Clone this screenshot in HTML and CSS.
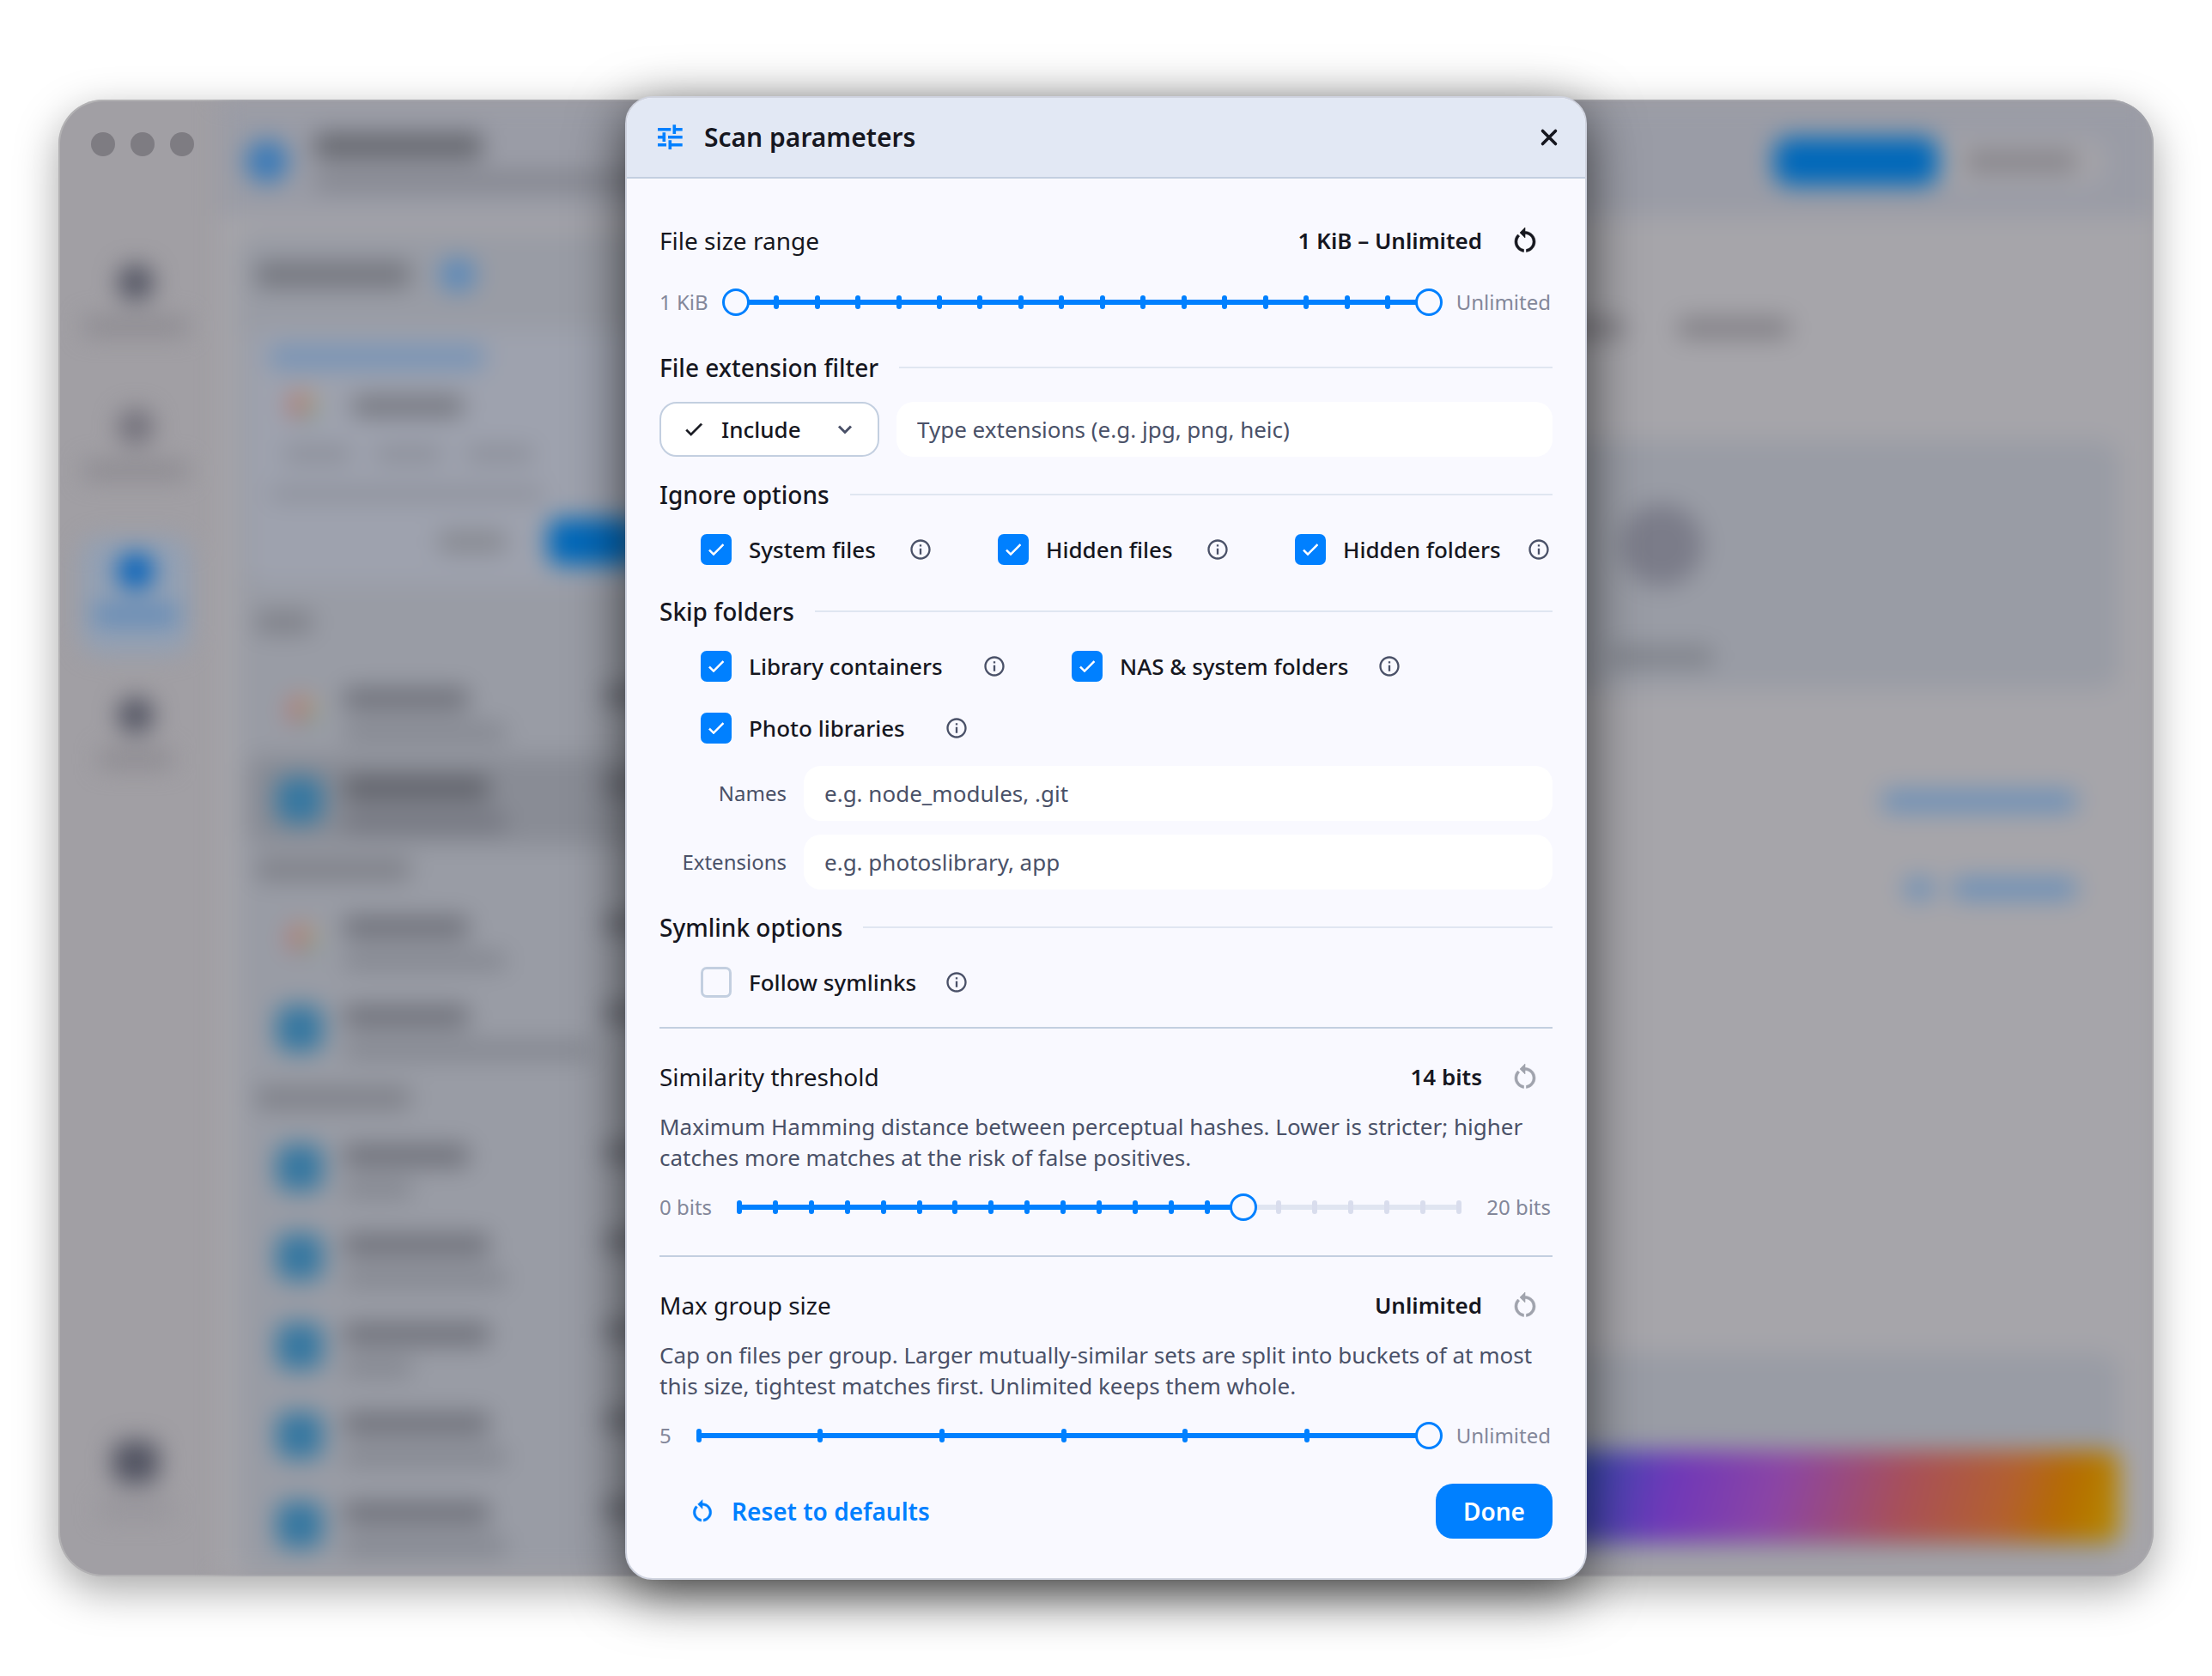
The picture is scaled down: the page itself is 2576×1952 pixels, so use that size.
FILE: index.html
```html
<!DOCTYPE html>
<html lang="en">
<head>
    <meta charset="UTF-8">
    <meta name="viewport" content="width=device-width, initial-scale=1.0">
    <title>Scan parameters</title>
    <link rel="stylesheet" href="styles.css">
</head>
<body>
    <!-- shared icons -->
    <svg class="sprite" aria-hidden="true">
        <symbol id="icon-reset" viewBox="0 0 24 24">
            <path d="M12 5V2L8 6l4 4V7c3.31 0 6 2.69 6 6 0 2.97-2.17 5.43-5 5.91v2.02c3.95-.49 7-3.85 7-7.93 0-4.42-3.58-8-8-8zm-6 8c0-1.65.67-3.15 1.76-4.24L6.34 7.34C4.9 8.79 4 10.79 4 13c0 4.08 3.05 7.44 7 7.93v-2.02c-2.83-.48-5-2.94-5-5.91z" fill="currentColor"/>
        </symbol>
        <symbol id="icon-info" viewBox="0 0 24 24">
            <path d="M11 7h2v2h-2zm0 4h2v6h-2zm1-9C6.48 2 2 6.48 2 12s4.48 10 10 10 10-4.48 10-10S17.52 2 12 2zm0 18c-4.41 0-8-3.59-8-8s3.59-8 8-8 8 3.59 8 8-3.59 8-8 8z" fill="currentColor"/>
        </symbol>
        <symbol id="icon-check" viewBox="0 0 24 24">
            <path d="M9 16.17L4.83 12l-1.42 1.41L9 19 21 7l-1.41-1.41z" fill="currentColor"/>
        </symbol>
    </svg>

    <div class="stage">
        <!-- app window, blurred while the dialog is open -->
        <div class="window" aria-hidden="true">
            <div class="lights"><i></i><i></i><i></i></div>
            <div class="app">
                <div class="rail">
                    <div class="rail-item"><i class="dot"></i><i class="cap"></i></div>
                    <div class="rail-item"><i class="dot faint"></i><i class="cap"></i></div>
                    <div class="rail-item active"><i class="dot"></i><i class="cap"></i></div>
                    <div class="rail-item"><i class="dot"></i><i class="cap short"></i></div>
                    <div class="rail-item last"><i class="dot big"></i><i class="cap short faint"></i></div>
                </div>
                <div class="content">
                    <div class="topbar">
                        <i class="logo"></i>
                        <div class="topbar-text"><i class="bar title"></i><i class="bar subtitle"></i></div>
                        <div class="segmented"><i class="segment on"></i><div class="segment"><i class="bar"></i></div></div>
                    </div>
                    <div class="columns">
                        <div class="list">
                            <div class="list-head"><i class="bar"></i><i class="count"></i></div>
                            <div class="card">
                                <i class="bar link"></i>
                                <div class="card-row"><i class="google"></i><i class="bar name"></i></div>
                                <div class="card-meta"><i class="bar"></i><i class="bar"></i><i class="bar"></i></div>
                                <i class="bar note"></i>
                                <div class="card-actions"><i class="bar"></i><i class="card-button"></i></div>
                            </div>
                            <i class="bar group short"></i>
                            <div class="row"><i class="google"></i><div><i class="bar name"></i><i class="bar meta"></i></div><i class="mark"></i></div>
                            <div class="row selected"><i class="folder"></i><div><i class="bar name wide"></i><i class="bar meta"></i></div><i class="mark"></i></div>
                            <i class="bar group"></i>
                            <div class="row"><i class="google"></i><div><i class="bar name"></i><i class="bar meta"></i></div><i class="mark"></i></div>
                            <div class="row"><i class="folder"></i><div><i class="bar name"></i><i class="bar meta long"></i></div><i class="mark"></i></div>
                            <i class="bar group"></i>
                            <div class="row"><i class="folder"></i><div><i class="bar name"></i><i class="bar meta brief"></i></div><i class="mark"></i></div>
                            <div class="row"><i class="folder"></i><div><i class="bar name wide"></i><i class="bar meta"></i></div><i class="mark"></i></div>
                            <div class="row"><i class="folder"></i><div><i class="bar name wide"></i><i class="bar meta brief"></i></div><i class="mark"></i></div>
                            <div class="row"><i class="folder"></i><div><i class="bar name wide"></i><i class="bar meta"></i></div><i class="mark"></i></div>
                            <div class="row"><i class="folder"></i><div><i class="bar name wide"></i><i class="bar meta"></i></div><i class="mark"></i></div>
                        </div>
                        <div class="main">
                            <div class="tabs"><i class="bar"></i><i class="bar"></i></div>
                            <div class="drop"><i class="drop-icon"></i><i class="bar"></i></div>
                            <div class="links"><i class="bar link"></i><div><i class="bar link"></i><i class="bar link"></i></div></div>
                            <div class="footer"><i class="rainbow"></i></div>
                        </div>
                    </div>
                </div>
            </div>
        </div>

        <form class="dialog" role="dialog" aria-labelledby="dialogTitle">
            <header class="dialog-head">
                <svg class="tune" viewBox="0 0 40 40" aria-hidden="true">
                    <path d="M4 10.7h15.3M23.3 5.3V16M23.3 10.7h9.4M4 19.7h7.3M11.3 14.3V25M16 19.7h16.7M4 28.7h10M18.3 23.3V34M18.3 28.7h14.4" fill="none" stroke="currentColor" stroke-width="3.6"/>
                </svg>
                <h1 id="dialogTitle">Scan parameters</h1>
                <button type="button" class="close" aria-label="Close">
                    <svg viewBox="0 0 32 32"><path d="M8.5 8.5l15 15M23.5 8.5l-15 15" fill="none" stroke="currentColor" stroke-width="3.6" stroke-linecap="round"/></svg>
                </button>
            </header>

            <div class="dialog-body">
                <section class="param">
                    <div class="param-head">
                        <h2>File size range</h2>
                        <output>1 KiB – Unlimited</output>
                        <button type="button" class="icon-button" aria-label="Reset file size range"><svg><use href="#icon-reset"/></svg></button>
                    </div>
                    <div class="range-row">
                        <span>1 KiB</span>
                        <div class="slider dual" data-steps="17">
                            <input type="range" min="0" max="17" value="0" aria-label="Minimum file size">
                            <input type="range" min="0" max="17" value="17" aria-label="Maximum file size">
                        </div>
                        <span>Unlimited</span>
                    </div>
                </section>

                <section class="group">
                    <h2>File extension filter</h2>
                    <div class="filter">
                        <div class="select">
                            <svg class="select-check" aria-hidden="true"><use href="#icon-check"/></svg>
                            <select aria-label="Filter mode">
                                <option>Include</option>
                                <option>Exclude</option>
                            </select>
                            <svg class="select-arrow" viewBox="0 0 20 20" aria-hidden="true"><path d="M3 6.500l7 7 7-7" fill="none" stroke="currentColor" stroke-width="3"/></svg>
                        </div>
                        <input type="text" class="field" placeholder="Type extensions (e.g. jpg, png, heic)" aria-label="Extensions to filter">
                    </div>
                </section>

                <section class="group">
                    <h2>Ignore options</h2>
                    <div class="checks three">
                        <div class="check">
                            <label><input type="checkbox" checked><svg><use href="#icon-check"/></svg>System files</label>
                            <button type="button" class="info" aria-label="About system files"><svg><use href="#icon-info"/></svg></button>
                        </div>
                        <div class="check">
                            <label><input type="checkbox" checked><svg><use href="#icon-check"/></svg>Hidden files</label>
                            <button type="button" class="info" aria-label="About hidden files"><svg><use href="#icon-info"/></svg></button>
                        </div>
                        <div class="check">
                            <label><input type="checkbox" checked><svg><use href="#icon-check"/></svg>Hidden folders</label>
                            <button type="button" class="info" aria-label="About hidden folders"><svg><use href="#icon-info"/></svg></button>
                        </div>
                    </div>
                </section>

                <section class="group">
                    <h2>Skip folders</h2>
                    <div class="checks two">
                        <div class="check">
                            <label><input type="checkbox" checked><svg><use href="#icon-check"/></svg>Library containers</label>
                            <button type="button" class="info" aria-label="About library containers"><svg><use href="#icon-info"/></svg></button>
                        </div>
                        <div class="check">
                            <label><input type="checkbox" checked><svg><use href="#icon-check"/></svg>NAS &amp; system folders</label>
                            <button type="button" class="info" aria-label="About NAS and system folders"><svg><use href="#icon-info"/></svg></button>
                        </div>
                        <div class="check narrow">
                            <label><input type="checkbox" checked><svg><use href="#icon-check"/></svg>Photo libraries</label>
                            <button type="button" class="info" aria-label="About photo libraries"><svg><use href="#icon-info"/></svg></button>
                        </div>
                    </div>
                    <div class="fields">
                        <label for="skipNames">Names</label>
                        <input type="text" class="field" id="skipNames" placeholder="e.g. node_modules, .git">
                        <label for="skipExtensions">Extensions</label>
                        <input type="text" class="field" id="skipExtensions" placeholder="e.g. photoslibrary, app">
                    </div>
                </section>

                <section class="group">
                    <h2>Symlink options</h2>
                    <div class="checks two">
                        <div class="check narrow">
                            <label><input type="checkbox"><svg><use href="#icon-check"/></svg>Follow symlinks</label>
                            <button type="button" class="info" aria-label="About symlinks"><svg><use href="#icon-info"/></svg></button>
                        </div>
                    </div>
                </section>

                <section class="param divided first">
                    <div class="param-head">
                        <h2>Similarity threshold</h2>
                        <output>14 bits</output>
                        <button type="button" class="icon-button" aria-label="Reset similarity threshold" disabled><svg><use href="#icon-reset"/></svg></button>
                    </div>
                    <p>Maximum Hamming distance between perceptual hashes. Lower is stricter; higher catches more matches at the risk of false positives.</p>
                    <div class="range-row">
                        <span>0 bits</span>
                        <div class="slider" data-steps="20">
                            <input type="range" min="0" max="20" value="14" aria-label="Similarity threshold">
                        </div>
                        <span>20 bits</span>
                    </div>
                </section>

                <section class="param divided">
                    <div class="param-head">
                        <h2>Max group size</h2>
                        <output>Unlimited</output>
                        <button type="button" class="icon-button" aria-label="Reset max group size" disabled><svg><use href="#icon-reset"/></svg></button>
                    </div>
                    <p>Cap on files per group. Larger mutually-similar sets are split into buckets of at most this size, tightest matches first. Unlimited keeps them whole.</p>
                    <div class="range-row">
                        <span>5</span>
                        <div class="slider" data-steps="6">
                            <input type="range" min="0" max="6" value="6" aria-label="Max group size">
                        </div>
                        <span>Unlimited</span>
                    </div>
                </section>

                <footer class="actions">
                    <button type="reset" class="reset"><svg><use href="#icon-reset"/></svg>Reset to defaults</button>
                    <button type="submit" class="done">Done</button>
                </footer>
            </div>
        </form>
    </div>

    <script src="script.js"></script>
</body>
</html>
```

FILE: styles.css
```css
* {
    box-sizing: border-box;
}
body {
    margin: 0;
    background: #fff;
    color: #16171f;
    font-family: 'Noto Sans', sans-serif;
    font-size: 26px;
    line-height: 36px;
}
button, input, select {
    font: inherit;
    color: inherit;
    margin: 0;
}
button {
    padding: 0;
    border: none;
    background: none;
    cursor: pointer;
}
h1, h2, p {
    margin: 0;
}
svg {
    display: block;
    flex: none;
}
i {
    display: block;
    flex: none;
}
.sprite {
    display: none;
}

/* window and dialog share one grid cell */
.stage {
    display: grid;
    min-height: 100vh;
    padding: 112px 68px;
}
.window, .dialog {
    grid-area: 1 / 1;
}

/* app window */
.window {
    position: relative;
    display: flex;
    margin: 4px 0;
    border-radius: 52px;
    background: #a19fa4;
    box-shadow: inset 0 0 0 2px rgba(190, 190, 190, 0.6), 0 16px 50px rgba(0, 0, 0, 0.35);
    overflow: hidden;
}
.lights {
    position: absolute;
    z-index: 1;
    top: 38px;
    left: 38px;
    display: flex;
    gap: 18px;
}
.lights i {
    width: 28px;
    height: 28px;
    border-radius: 50%;
    background: #7e7c82;
}
.app {
    display: flex;
    flex: 1;
    filter: blur(14px);
}
.bar {
    width: 130px;
    height: 24px;
    border-radius: 8px;
    background: #75777f;
}
.bar.link {
    background: #6a8fb8;
}

.rail {
    display: flex;
    flex-direction: column;
    align-items: center;
    gap: 32px;
    width: 188px;
    padding: 174px 8px 40px 0;
}
.rail-item {
    display: flex;
    flex-direction: column;
    align-items: center;
    gap: 20px;
    width: 128px;
    height: 136px;
    padding-top: 18px;
    border-radius: 24px;
}
.rail-item.active {
    background: #92a0b4;
}
.rail-item.last {
    margin-top: auto;
}
.dot {
    width: 42px;
    height: 42px;
    border-radius: 50%;
    background: #525462;
}
.dot.faint {
    background: #72707a;
}
.dot.big {
    width: 54px;
    height: 50px;
    border-radius: 16px;
}
.cap {
    width: 120px;
    height: 20px;
    background: #8b898f;
}
.cap.short {
    width: 84px;
}
.cap.faint {
    background: #96949a;
}
.active .dot {
    background: #0060bb;
}
.active .cap {
    width: 96px;
    background: #5c88b8;
}

.content {
    display: flex;
    flex-direction: column;
    flex: 1;
    background: #a6a5aa;
}
.topbar {
    display: flex;
    align-items: center;
    gap: 30px;
    height: 136px;
    padding: 8px 58px 0 30px;
    background: #9a9ca6;
}
.logo {
    width: 50px;
    height: 50px;
    border-radius: 50%;
    background: #3a7ab8;
}
.topbar-text {
    flex: 1;
}
.title {
    width: 196px;
    height: 30px;
    margin-bottom: 16px;
    background: #66686f;
}
.subtitle {
    width: 440px;
    height: 20px;
    background: #82848d;
}
.segmented {
    display: flex;
    border-radius: 20px;
    background: #a5a4a9;
}
.segment {
    display: flex;
    align-items: center;
    justify-content: center;
    width: 192px;
    height: 56px;
    border-radius: 18px;
}
.segment.on {
    background: #0068ba;
}
.segment .bar {
    background: #86848a;
}
.columns {
    display: flex;
    flex: 1;
    gap: 24px;
    padding: 18px 40px 4px 20px;
}

.list {
    display: flex;
    flex-direction: column;
    width: 480px;
    padding: 32px 12px 0;
    background: #999ca5;
    border-radius: 24px;
}
.list-head {
    display: flex;
    align-items: center;
    gap: 34px;
    height: 36px;
    padding-left: 10px;
}
.list-head .bar {
    width: 180px;
    height: 30px;
}
.count {
    width: 42px;
    height: 38px;
    border-radius: 18px;
    background: #5a89ba;
}
.card {
    display: flex;
    flex-direction: column;
    height: 296px;
    margin: 46px 0 32px;
    padding: 18px 0 0 26px;
    border-radius: 20px;
    background: #9ea2ae;
}
.card .link {
    width: 250px;
    height: 28px;
    background: #7894b6;
}
.card-row {
    display: flex;
    align-items: center;
    gap: 40px;
    margin-top: 26px;
    padding-left: 22px;
}
.google {
    width: 34px;
    height: 34px;
    border-radius: 50%;
    background: conic-gradient(#b5a080 0 25%, #7f9f86 0 50%, #8c7da5 0 60%, #bb7268 0);
}
.card-meta {
    display: flex;
    gap: 26px;
    margin: 30px 0;
    padding-left: 16px;
}
.card-meta .bar, .note {
    width: 80px;
    height: 18px;
    background: #8a8d97;
}
.card .note {
    width: 320px;
    height: 14px;
}
.card-actions {
    display: flex;
    align-items: center;
    justify-content: flex-end;
    gap: 48px;
    margin-top: 22px;
}
.card-actions .bar {
    width: 80px;
    background: #86888f;
}
.card-button {
    width: 106px;
    height: 54px;
    border-radius: 14px;
    background: #0068ba;
}
.group.bar {
    width: 180px;
    height: 26px;
    margin: 16px 10px;
    background: #7f8189;
}
.group.bar.short {
    width: 66px;
    margin: 0 10px 38px;
}
.row {
    display: flex;
    align-items: center;
    gap: 24px;
    height: 104px;
    padding-left: 34px;
    border-radius: 16px;
}
.row.selected {
    background: #898c95;
}
.row .google {
    margin: 0 6px 0 14px;
}
.row .name {
    width: 146px;
    height: 26px;
    margin: 8px 0 16px;
    background: #70727b;
}
.row .name.wide {
    width: 170px;
}
.row .meta {
    width: 190px;
    height: 20px;
    background: #82858e;
}
.row .meta.brief {
    width: 80px;
}
.row .meta.long {
    width: 290px;
}
.row.selected .name {
    background: #5f6169;
}
.row.selected .meta {
    background: #72747e;
}
.folder {
    width: 54px;
    height: 54px;
    border-radius: 14px;
    background: #3577a1;
}
.mark {
    width: 40px;
    height: 22px;
    margin: 0 0 36px auto;
    background: #6c6e77;
}
/* long meta lines run under the dialog */
.row > div {
    width: 210px;
}

.main {
    display: flex;
    flex-direction: column;
    flex: 0 1 1066px;
    margin-left: auto;
}
.tabs {
    display: flex;
    justify-content: flex-end;
    gap: 62px;
    margin: 100px 384px 119px 0;
}
.tabs .bar {
    background: #828086;
}
.drop {
    display: flex;
    flex-direction: column;
    align-items: center;
    gap: 70px;
    height: 290px;
    padding-top: 74px;
    border-radius: 24px;
    background: #999ca5;
}
.drop-icon {
    width: 96px;
    height: 96px;
    border-radius: 50%;
    background: #7b7c89;
}
.drop .bar {
    width: 120px;
    background: #80838b;
}
.links {
    display: flex;
    flex-direction: column;
    align-items: flex-end;
    gap: 78px;
    padding: 118px 50px;
}
.links .bar {
    width: 226px;
}
.links div {
    display: flex;
    gap: 22px;
}
.links div .bar:first-child {
    width: 34px;
}
.links div .bar:last-child {
    width: 144px;
}
.footer {
    display: flex;
    align-items: flex-end;
    height: 240px;
    margin: auto 0 16px;
    padding-bottom: 20px;
    border-radius: 24px;
    background: #999ca5;
}
.rainbow {
    flex: 1;
    height: 106px;
    border-radius: 16px;
    background: linear-gradient(105deg, #006ad0 0%, #2c4fb0 38%, #7038b8 51%, #8b45a5 62%, #a85058 76%, #b3602f 87%, #b56c00 93%, #b58700 99%);
}

/* dialog */
.dialog {
    position: relative;
    place-self: center;
    width: 100%;
    max-width: 1120px;
    border: 2px solid #cfd3df;
    border-radius: 32px;
    background: #f9f9ff;
    box-shadow: 0 16px 64px rgba(0, 0, 0, 0.65);
    overflow: hidden;
}
.dialog-head {
    display: flex;
    align-items: center;
    gap: 18px;
    height: 94px;
    padding: 0 26px 0 32px;
    border-bottom: 2px solid #c3cfe0;
    background: #e2e8f4;
}
.tune {
    width: 40px;
    height: 40px;
    color: #0080ff;
}
.dialog-head h1 {
    flex: 1;
    font-size: 30px;
    font-weight: 600;
}
.close svg {
    width: 32px;
    height: 32px;
}
.dialog-body {
    padding: 40px 38px 46px;
}
.dialog h2 {
    font-size: 28px;
    line-height: 40px;
    font-weight: 500;
}

/* parameter blocks with a slider */
.param-head {
    display: flex;
    align-items: center;
    height: 64px;
}
.dialog .param-head h2 {
    flex: 1;
    font-weight: 400;
}
.param-head output {
    margin-right: 18px;
    font-weight: 600;
}
.icon-button {
    display: flex;
    align-items: center;
    justify-content: center;
    width: 64px;
    height: 64px;
}
.icon-button svg {
    width: 36px;
    height: 36px;
    stroke: currentColor;
    stroke-width: 0.4;
}
.icon-button:disabled {
    color: #a0a3ad;
    cursor: default;
}
.param p {
    margin-top: 8px;
    color: #4a5168;
}
.divided {
    margin-top: 40px;
    padding-top: 24px;
    border-top: 2px solid #c3cfe0;
}
.divided.first {
    margin-top: 24px;
}
.range-row {
    display: flex;
    align-items: center;
    gap: 16px;
    margin-top: 24px;
    height: 32px;
    padding-right: 2px;
    font-size: 24px;
    color: #83879a;
}
.slider {
    position: relative;
    flex: 1;
    height: 32px;
}
.track, .fill {
    position: absolute;
    top: 13px;
    left: 16px;
    right: 16px;
    height: 6px;
    border-radius: 3px;
    background: #e0e5f1;
}
.fill {
    right: auto;
    background: #0080ff;
}
.ticks {
    position: absolute;
    top: 8px;
    left: 13px;
    right: 13px;
    display: flex;
    justify-content: space-between;
}
.ticks i {
    width: 6px;
    height: 16px;
    border-radius: 3px;
    background: #d9dded;
}
.ticks i.on {
    background: #0080ff;
}
.slider input {
    -webkit-appearance: none;
    appearance: none;
    position: absolute;
    top: 0;
    left: 0;
    width: 100%;
    height: 32px;
    background: none;
    outline: none;
}
.slider input::-webkit-slider-thumb {
    -webkit-appearance: none;
    width: 32px;
    height: 32px;
    border: 3px solid #0080ff;
    border-radius: 50%;
    background: #f9f9ff;
    pointer-events: auto;
}
.slider.dual input {
    pointer-events: none;
}

/* titled groups */
.group:not(.bar) {
    margin-top: 24px;
}
.param + .group:not(.bar) {
    margin-top: 40px;
}
.group h2 {
    display: flex;
    align-items: center;
    gap: 24px;
}
.group h2::after {
    content: '';
    flex: 1;
    height: 2px;
    background: #e0e6f1;
}
.filter {
    display: flex;
    gap: 20px;
    margin-top: 20px;
}
.select {
    position: relative;
    width: 256px;
}
.select select {
    -webkit-appearance: none;
    appearance: none;
    width: 100%;
    height: 64px;
    padding: 0 64px 0 70px;
    border: 2px solid #c3cfe0;
    border-radius: 20px;
    background: #fff;
    font-weight: 500;
}
.select svg {
    position: absolute;
    pointer-events: none;
}
.select-check {
    top: 19px;
    left: 27px;
    width: 26px;
    height: 26px;
    stroke: currentColor;
    stroke-width: 0.6;
}
.select-arrow {
    top: 22px;
    right: 30px;
    width: 20px;
    height: 20px;
    color: #4a5168;
}
.field {
    flex: 1;
    min-width: 0;
    height: 64px;
    padding: 0 24px;
    border: none;
    border-radius: 20px;
    background: #fff;
}
.field::placeholder {
    color: #4a5168;
    opacity: 1;
}
.checks {
    display: grid;
    gap: 16px 74px;
    margin-top: 16px;
    padding-left: 48px;
}
.checks.three {
    grid-template-columns: 272px 272px 300px;
}
.checks.two {
    grid-template-columns: 358px 386px;
}
.check {
    display: flex;
    align-items: center;
    justify-content: space-between;
    height: 56px;
}
.check.narrow {
    width: 314px;
}
.check label {
    position: relative;
    display: flex;
    align-items: center;
    gap: 20px;
    font-weight: 500;
    white-space: nowrap;
}
.check input {
    -webkit-appearance: none;
    appearance: none;
    width: 36px;
    height: 36px;
    border: 3px solid #c3cfe0;
    border-radius: 7px;
}
.check input:checked {
    border-color: #0080ff;
    background: #0080ff;
}
.check label svg {
    position: absolute;
    top: 6px;
    left: 6px;
    width: 24px;
    height: 24px;
    color: #fff;
    stroke: currentColor;
    stroke-width: 0.6;
    visibility: hidden;
}
.check input:checked + svg {
    visibility: visible;
}
.info {
    display: flex;
    align-items: center;
    justify-content: center;
    width: 32px;
    height: 32px;
    color: #4a5168;
}
.info svg {
    width: 28px;
    height: 28px;
}
.fields {
    display: grid;
    grid-template-columns: 148px 1fr;
    gap: 16px 20px;
    align-items: center;
    margin-top: 16px;
}
.fields label {
    font-size: 24px;
    text-align: right;
    color: #4a5168;
}

.actions {
    display: flex;
    align-items: center;
    justify-content: space-between;
    margin-top: 40px;
    font-size: 28px;
    font-weight: 600;
}
.reset {
    display: flex;
    align-items: center;
    gap: 18px;
    height: 64px;
    padding: 0 34px;
    color: #0080ff;
}
.reset svg {
    width: 32px;
    height: 32px;
    stroke: currentColor;
    stroke-width: 0.4;
}
.done {
    height: 64px;
    padding: 0 32px;
    border-radius: 20px;
    background: #0080ff;
    color: #fff;
}
```

FILE: script.js
```js
// Draw the track, the filled part and the tick marks of each slider
document.querySelectorAll(".slider").forEach((slider) => {
    const steps = Number(slider.dataset.steps);
    const inputs = slider.querySelectorAll("input");
    const track = document.createElement("div");
    const fill = document.createElement("div");
    const ticks = document.createElement("div");
    track.className = "track";
    fill.className = "fill";
    ticks.className = "ticks";
    for (let i = 0; i <= steps; i++) {
        ticks.appendChild(document.createElement("i"));
    }
    slider.prepend(track, fill, ticks);

    const update = () => {
        const values = Array.from(inputs, (input) => Number(input.value));
        const low = values.length > 1 ? Math.min(...values) : 0;
        const high = Math.max(...values);
        fill.style.left = `calc(16px + (100% - 32px) * ${low / steps})`;
        fill.style.width = `calc((100% - 32px) * ${(high - low) / steps})`;
        Array.from(ticks.children).forEach((tick, i) => {
            tick.classList.toggle("on", i >= low && i <= high);
        });
    };

    inputs.forEach((input) => input.addEventListener("input", update));
    update();
});
```
